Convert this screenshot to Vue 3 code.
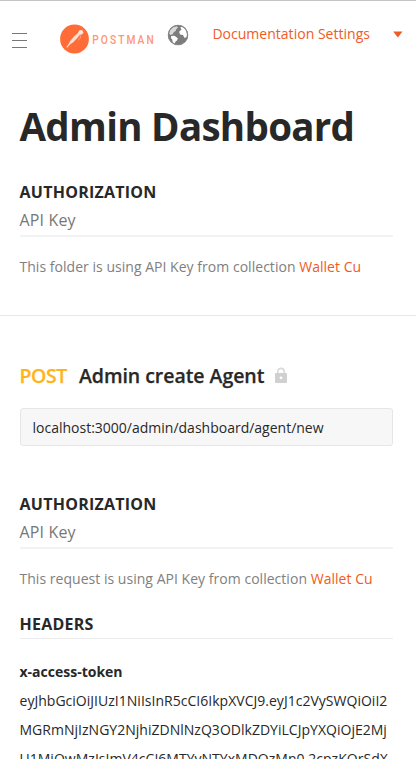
<script setup>
const tokenLines = [
  'eyJhbGciOiJIUzI1NiIsInR5cCI6IkpXVCJ9.eyJ1c2VySWQiOiI2',
  'MGRmNjIzNGY2NjhiZDNlNzQ3ODlkZDYiLCJpYXQiOjE2Mj',
  'U1MjQwMzIsImV4cCI6MTYyNTYxMDQzMn0.2cpzKQrSdX',
]
</script>

<template>
  <div class="page">
    <header class="bar">
      <div class="menu"><i></i><i></i><i></i></div>
      <svg class="logo" width="96" height="30" viewBox="0 0 96 30">
        <circle cx="14.5" cy="15" r="14.4" fill="#ff6c37" />
        <path d="M18.6 8.6 14 12.6 10 17.2 8.2 21.4 12.9 18.4 17.4 14 19.9 10.6Z" fill="#ffe0d5" />
        <path d="m6.8 23.4 3.6-4.6" stroke="#ffe0d5" stroke-width="1.1" fill="none" />
        <path d="m20 11 .5 3-2.3 2" stroke="#ffb296" stroke-width=".8" fill="none" />
        <circle cx="20.8" cy="8.3" r="2.4" fill="#ffe6dc" />
        <text transform="translate(32.2 20.2) scale(.76 1)" textLength="81" class="wordmark">POSTMAN</text>
      </svg>
      <svg class="globe" width="22" height="22" viewBox="0 0 22 22">
        <circle cx="11" cy="11" r="10" fill="#7c7c7c" />
        <path d="M3.1 5.8 6.5 2.9 9.8 2.3 11 3.8 9.1 5.2 8.7 7 6.9 7.9 5.7 10.3 3.2 11 1.9 9Z" fill="#d9d9d9" />
        <path d="M4.2 12.1 7.5 11.8 10.8 14.2 10.2 16.3 8.4 17.7 7.7 19.8 5.7 18.2 5.2 15.5 3.9 14Z" fill="#fff" />
        <path d="m13.2 3.5 2-.8 3.5 2.7 1.3 3.5-.3 4-2.2 1-1.5-2.8-3-.7-.9-2.7 2.4-2.1Z" fill="#fff" />
        <circle cx="11" cy="11" r="9.7" fill="none" stroke="#858585" stroke-width="1.1" />
      </svg>
      <span class="settings">Documentation Settings</span>
      <svg class="caret" width="10" height="7" viewBox="0 0 10 7"><path d="M.2.5h9.3L4.9 6.5Z" fill="#f15a24" /></svg>
    </header>

    <section class="folder">
      <h1>Admin Dashboard</h1>
      <h2>AUTHORIZATION</h2>
      <div class="kind">API Key</div>
      <p class="note">This folder is using API Key from collection <a>Wallet Cu</a></p>
    </section>

    <section class="request">
      <div class="title">
        <span class="method">POST</span>
        <span class="name">Admin create Agent</span>
        <svg width="12" height="16" viewBox="0 0 12 16">
          <path d="M2.8 7V4.7C2.8.2 9.2.2 9.2 4.7V7" fill="none" stroke="#d9d9d9" stroke-width="1.6" />
          <rect y="6" width="12" height="10" rx=".8" fill="#d0d0d0" />
          <circle cx="6" cy="10.8" r="1.4" fill="#fff" />
        </svg>
      </div>
      <div class="url">localhost:3000/admin/dashboard/agent/new</div>
      <h2>AUTHORIZATION</h2>
      <div class="kind">API Key</div>
      <p class="note">This request is using API Key from collection <a>Wallet Cu</a></p>
      <h2 class="headers">HEADERS</h2>
      <div class="key">x-access-token</div>
      <div class="token">
        <div v-for="(line, i) in tokenLines" :key="i">{{ line }}</div>
      </div>
    </section>
  </div>
</template>

<style>
body { background: #fff; overflow: hidden; }
</style>
<style scoped>
.page { box-sizing: border-box; width: 416px; height: 759px; overflow: hidden; border-top: 1px solid #c4c4c4; background: #fff; color: #282828; font-family: "Open Sans", sans-serif; font-size: 14px; }
.bar { display: flex; align-items: flex-start; height: 98px; padding-left: 12px; }
.menu { display: flex; flex-direction: column; gap: 6px; width: 15px; padding-top: 32px; }
.menu i { height: 1px; background: #777; }
.logo { margin: 23px 0 0 33px; overflow: visible; }
.wordmark { font-family: Roboto, sans-serif; font-size: 13.5px; font-weight: 500; fill: #ff9775; }
.globe { margin: 23px 0 0 11px; }
.settings { margin: 23px 0 0 23.4px; width: 157.6px; line-height: 20px; letter-spacing: .02px; color: #f15a24; white-space: nowrap; }
.caret { margin: 30px 0 0 23px; }
.folder { box-sizing: border-box; height: 217px; padding: 0 23px 0 19.5px; border-bottom: 1px solid #e8e8e8; }
h1 { margin: 0; font-size: 38.5px; line-height: 54px; font-weight: 700; letter-spacing: -.7px; white-space: nowrap; }
h2 { margin: 0; font-size: 16px; line-height: 24px; font-weight: 700; letter-spacing: .25px; }
.folder h2 { margin-top: 27px; }
.kind { box-sizing: border-box; height: 33px; padding-top: 4px; border-bottom: 2px solid #f3f3f3; color: #777; font-size: 16px; line-height: 24px; letter-spacing: .15px; }
.note { margin: 20px 0 0; color: #808080; line-height: 20px; letter-spacing: .03px; white-space: nowrap; }
.note a { color: #f15a24; }
.request { padding: 46px 23px 0 19.5px; }
.title { display: flex; align-items: center; height: 28px; font-size: 19.5px; font-weight: 600; line-height: 28px; letter-spacing: -.05px; -webkit-text-stroke: .25px currentColor; white-space: nowrap; }
.method { width: 59.5px; color: #ffb41c; letter-spacing: -.4px; }
.name { width: 185px; margin-right: 11px; }
.title svg { margin-top: -2px; }
.url { box-sizing: border-box; height: 38px; margin: 18px 0 46px; padding: 9px 12px 7px; border: 1px solid #e6e6e6; border-radius: 3px; background: #f7f7f7; line-height: 20px; }
.headers { box-sizing: border-box; height: 27px; margin-top: 23px; border-bottom: 1px solid #ededed; }
.key { margin-top: 23px; line-height: 20px; font-weight: 700; }
.token { padding-top: 4px; line-height: 29px; letter-spacing: .02px; white-space: nowrap; }
</style>
